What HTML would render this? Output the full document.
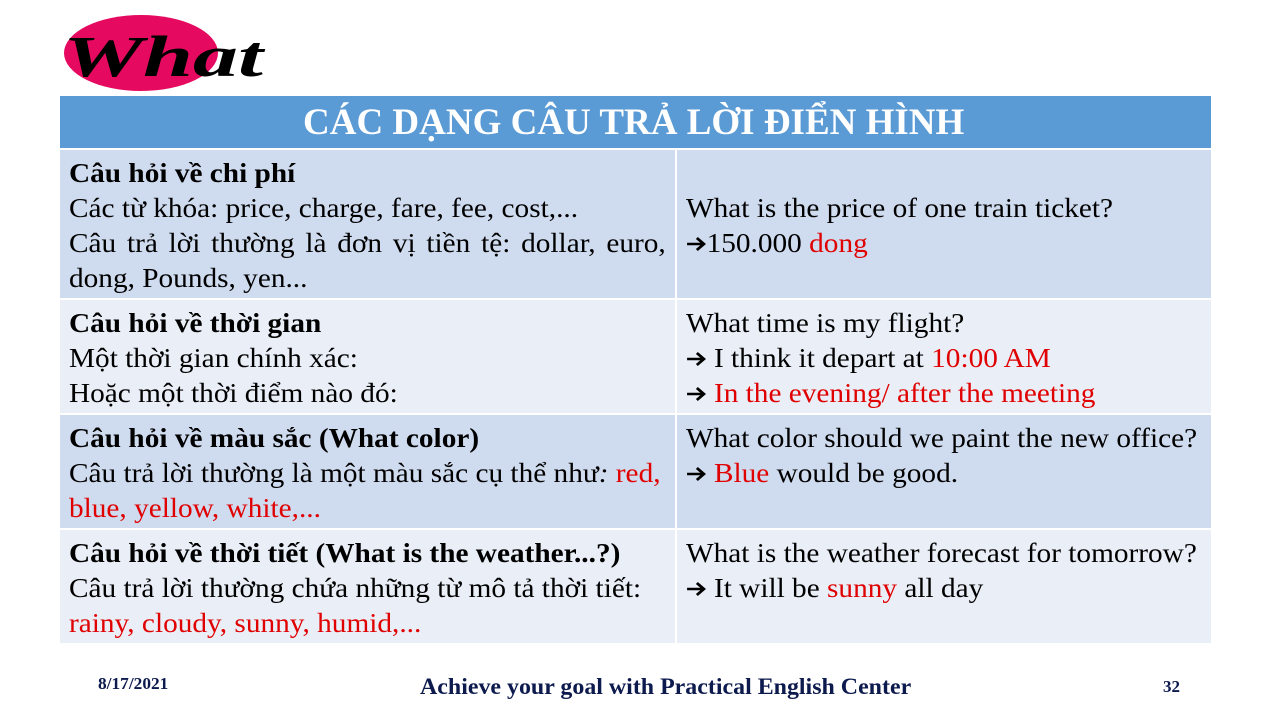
<!DOCTYPE html>
<html><head><meta charset="utf-8"><style>
body{margin:0;width:1280px;height:720px;background:#fff;position:relative;overflow:hidden;font-family:"Liberation Serif",serif;}
.abs{position:absolute}
.hdr{left:60px;top:96px;width:1151px;height:52px;background:#5b9bd5;}
.hdr div{position:absolute;left:243px;top:0;color:#fff;font-weight:bold;font-size:37px;line-height:54px;white-space:nowrap;}
.cell{position:absolute;box-sizing:border-box;padding:6px 9px;}
.in{font-size:27px;line-height:35px;color:#000;transform:scaleX(1.085);transform-origin:left top;white-space:nowrap}
.d{background:#cfdbee}.l{background:#e9eef7}
.r{color:#e00000}
.a{display:inline-block;width:19px;height:16px;vertical-align:0px}
b{font-weight:bold}
.foot{font-weight:bold;color:#0c1a4d;white-space:nowrap;transform-origin:left}
</style></head><body>
<svg width="0" height="0" style="position:absolute"><defs><symbol id="ar" viewBox="0 0 19 16"><path d="M1 8H16M10 2L16.5 8L10 14" stroke="#000" stroke-width="2.6" fill="none"/></symbol></defs></svg>
<svg class="abs" style="left:55px;top:10px" width="220" height="90">
<ellipse cx="86" cy="43" rx="77" ry="38" fill="#e5095f"/>
<text x="8" y="66" font-family="Liberation Serif" font-style="italic" font-weight="bold" font-size="58" fill="#000" textLength="200" lengthAdjust="spacingAndGlyphs">What</text>
</svg>
<div class="abs hdr"><div>CÁC DẠNG CÂU TRẢ LỜI ĐIỂN HÌNH</div></div>

<div class="cell d" style="left:60px;top:150px;width:615px;height:148px"><div class="in"><b>Câu hỏi về chi phí</b><br>Các từ khóa: price, charge, fare, fee, cost,...<br><span style="display:block;width:550px;text-align:justify;text-align-last:justify;white-space:normal">Câu trả lời thường là đơn vị tiền tệ: dollar, euro,</span>dong, Pounds, yen...</div></div>
<div class="cell d" style="left:677px;top:150px;width:534px;height:148px;padding-top:41px"><div class="in">What is the price of one train ticket?<br><svg class="a"><use href="#ar"/></svg>150.000 <span class="r">dong</span></div></div>

<div class="cell l" style="left:60px;top:300px;width:615px;height:113px"><div class="in"><b>Câu hỏi về thời gian</b><br>Một thời gian chính xác:<br>Hoặc một thời điểm nào đó:</div></div>
<div class="cell l" style="left:677px;top:300px;width:534px;height:113px"><div class="in">What time is my flight?<br><svg class="a"><use href="#ar"/></svg> I think it depart at <span class="r">10:00 AM</span><br><svg class="a"><use href="#ar"/></svg> <span class="r">In the evening/ after the meeting</span></div></div>

<div class="cell d" style="left:60px;top:415px;width:615px;height:113px"><div class="in"><b>Câu hỏi về màu sắc (What color)</b><br>Câu trả lời thường là một màu sắc cụ thể như<i>:</i> <span class="r">red,<br>blue, yellow, white,...</span></div></div>
<div class="cell d" style="left:677px;top:415px;width:534px;height:113px"><div class="in">What color should we paint the new office?<br><svg class="a"><use href="#ar"/></svg> <span class="r">Blue</span> would be good.</div></div>

<div class="cell l" style="left:60px;top:530px;width:615px;height:113px"><div class="in"><b>Câu hỏi về thời tiết (What is the weather...?)</b><br>Câu trả lời thường chứa những từ mô tả thời tiết:<br><span class="r">rainy, cloudy, sunny, humid,...</span></div></div>
<div class="cell l" style="left:677px;top:530px;width:534px;height:113px"><div class="in">What is the weather forecast for tomorrow?<br><svg class="a"><use href="#ar"/></svg> It will be <span class="r">sunny</span> all day</div></div>

<div class="abs foot" style="left:98px;top:674px;font-size:17px;transform:scaleX(1.02)">8/17/2021</div>
<div class="abs foot" style="left:420px;top:674px;font-size:23px;transform:scaleX(1.04)">Achieve your goal with Practical English Center</div>
<div class="abs foot" style="left:1163px;top:677px;font-size:17px">32</div>
</body></html>
